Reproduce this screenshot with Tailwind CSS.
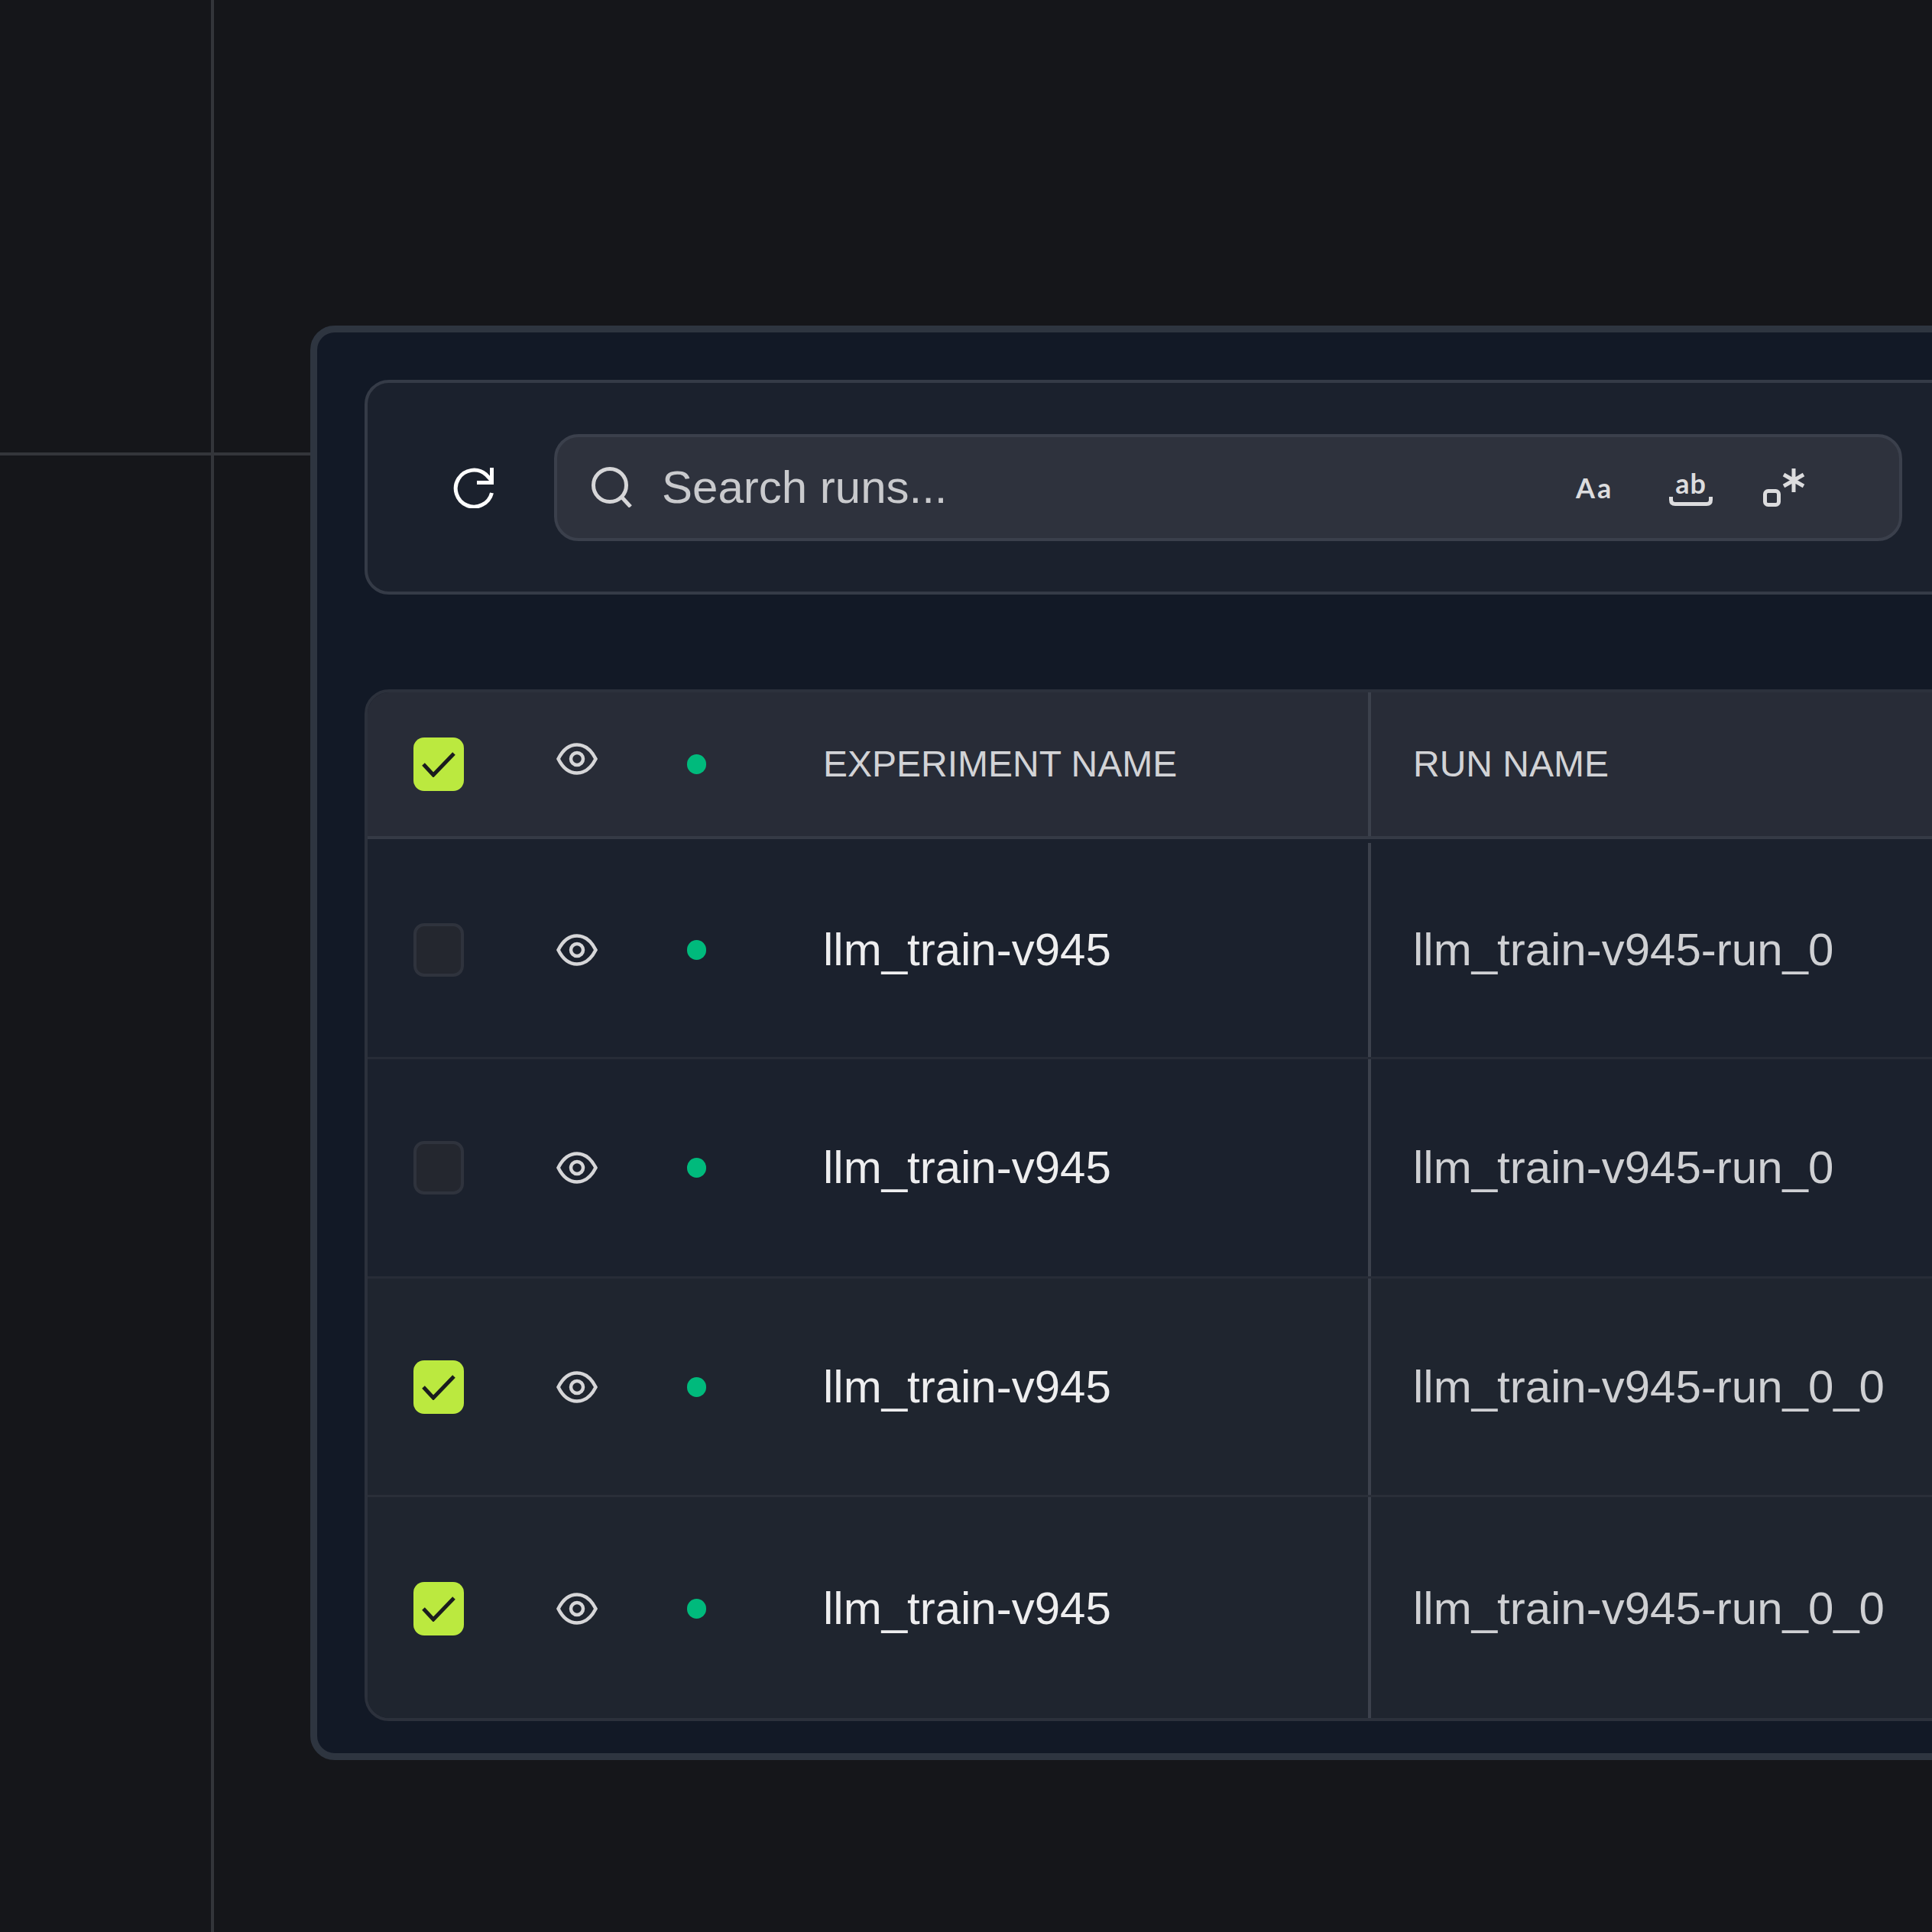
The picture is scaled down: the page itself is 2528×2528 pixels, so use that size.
<!DOCTYPE html>
<html lang="en">
<head>
    <meta charset="UTF-8">
    <title>Runs table</title>
    <script src="https://cdn.jsdelivr.net/npm/@tailwindcss/browser@4"></script>
</head>
<body class="relative w-[2528px] h-[2528px] overflow-hidden bg-[#15161a] font-['Liberation_Sans',sans-serif]">
    <!-- guide lines behind the panel -->
    <div class="absolute left-[276px] top-0 w-[4px] h-full bg-[#33353a]"></div>
    <div class="absolute left-0 top-[592px] w-[406px] h-[4px] bg-[#33353a]"></div>

    <div class="relative ml-[406px] mt-[426px] w-[2300px] h-[1877px] p-[62px] border-[9px] border-[#2e3540] rounded-[32px] bg-[#121926] [margin-top:426px]">
        <!-- toolbar -->
        <div class="flex items-center h-[281px] pl-[112px] border-[4px] border-[#353b47] rounded-[32px] bg-[#1b212d]">
            <svg class="w-[53px] h-[53px] mt-[2px]" viewBox="0 0 53 53" fill="none" stroke="#ffffff" stroke-width="5">
                <path d="M50.5 33 A24 24 0 1 1 43 9 L50.5 17"/>
                <path d="M50.5 0 V19.5 H31"/>
            </svg>
            <div class="flex items-center ml-[79px] w-[1764px] h-[140px] pl-[45px] border-[4px] border-[#3b404c] rounded-[32px] bg-[#2e323d]">
                <svg class="w-[53px] h-[53px]" viewBox="0 0 53 53" fill="none" stroke="#d6d6d8" stroke-width="5">
                    <circle cx="24" cy="24" r="21.5"/>
                    <path d="M40 40 L51 52"/>
                </svg>
                <span class="ml-[39px] w-[1196px] text-[60px] leading-none text-[#c9cacd]">Search runs...</span>
                <span class="w-[100px] font-['Lato',sans-serif] font-bold text-[36px] leading-none tracking-[3px] text-[#dcdcde]">Aa</span>
                <span class="flex flex-col items-center w-[57px] ml-[22px]">
                    <span class="font-['Lato',sans-serif] font-bold text-[36px] leading-none tracking-[1px] text-[#dcdcde]">ab</span>
                    <svg class="w-[57px] h-[12px]" viewBox="0 0 57 12" fill="none" stroke="#dcdcde" stroke-width="5"><path d="M2.5 0 V4 Q2.5 9.5 8 9.5 H49 Q54.5 9.5 54.5 4 V0"/></svg>
                </span>
                <svg class="w-[56px] h-[54px] ml-[66px]" viewBox="0 0 56 54" fill="none" stroke="#dcdcde">
                    <rect x="2.5" y="31.5" width="18" height="18" rx="4" stroke-width="5"/>
                    <path d="M40 2 V33 M27 10 L53 25 M53 10 L27 25" stroke-width="5"/>
                </svg>
            </div>
        </div>

        <!-- table -->
        <div class="mt-[124px] h-[1350px] overflow-hidden border-[4px] border-[#2c313c] rounded-[32px] bg-[#1b212d]">
            <div class="flex items-center h-[192px] border-b-[4px] border-[#353a45] bg-[#282c37]">
                <div class="flex items-center justify-center ml-[60px] w-[66px] h-[70px] rounded-[14px] bg-[#bbe93f]">
                    <svg class="w-[44px] h-[34px]" viewBox="0 0 44 34" fill="none" stroke="#1a1c1e" stroke-width="5"><path d="M2 17 L15 31 L42 3"/></svg>
                </div>
                <svg class="ml-[121px] mb-[14px] w-[54px] h-[42px] shrink-0" viewBox="0 0 54 42" fill="none" stroke="#d6d6d8" stroke-width="4.5"><path d="M2.5 21 C9 8 18 2.5 27 2.5 C36 2.5 45 8 51.5 21 C45 34 36 39.5 27 39.5 C18 39.5 9 34 2.5 21 Z"/><circle cx="27" cy="21" r="8"/></svg>
                <div class="ml-[117px] w-[25px] h-[26px] rounded-full bg-[#00ba7c]"></div>
                <div class="ml-[153px] w-[713px] text-[48px] text-[#d2d3d6]">EXPERIMENT NAME</div>
                <div class="self-stretch flex items-center pl-[55px] border-l-[4px] border-[#3c414c] text-[48px] text-[#d2d3d6]">RUN NAME</div>
            </div>

            <div class="mt-[5px]">
                <div class="flex items-center h-[283px] border-b-[3px] border-[#272c37] bg-[#1b212d]">
                    <div class="ml-[60px] w-[66px] h-[70px] border-[4px] border-[#2f333d] rounded-[14px] bg-[#24272f]"></div>
                    <svg class="ml-[121px] w-[54px] h-[42px] shrink-0" viewBox="0 0 54 42" fill="none" stroke="#d6d6d8" stroke-width="4.5"><path d="M2.5 21 C9 8 18 2.5 27 2.5 C36 2.5 45 8 51.5 21 C45 34 36 39.5 27 39.5 C18 39.5 9 34 2.5 21 Z"/><circle cx="27" cy="21" r="8"/></svg>
                    <div class="ml-[117px] w-[25px] h-[26px] rounded-full bg-[#00ba7c]"></div>
                    <div class="ml-[153px] w-[713px] text-[60px] text-[#eeeeef]">llm_train-v945</div>
                    <div class="self-stretch flex items-center pl-[55px] border-l-[4px] border-[#3c414c] text-[60px] text-[#cfd0d3]">llm_train-v945-run_0</div>
                </div>
                <div class="flex items-center h-[287px] border-b-[3px] border-[#272c37] bg-[#1b212d]">
                    <div class="ml-[60px] w-[66px] h-[70px] border-[4px] border-[#2f333d] rounded-[14px] bg-[#24272f]"></div>
                    <svg class="ml-[121px] w-[54px] h-[42px] shrink-0" viewBox="0 0 54 42" fill="none" stroke="#d6d6d8" stroke-width="4.5"><path d="M2.5 21 C9 8 18 2.5 27 2.5 C36 2.5 45 8 51.5 21 C45 34 36 39.5 27 39.5 C18 39.5 9 34 2.5 21 Z"/><circle cx="27" cy="21" r="8"/></svg>
                    <div class="ml-[117px] w-[25px] h-[26px] rounded-full bg-[#00ba7c]"></div>
                    <div class="ml-[153px] w-[713px] text-[60px] text-[#eeeeef]">llm_train-v945</div>
                    <div class="self-stretch flex items-center pl-[55px] border-l-[4px] border-[#3c414c] text-[60px] text-[#cfd0d3]">llm_train-v945-run_0</div>
                </div>
                <div class="flex items-center h-[286px] border-b-[3px] border-[#2a2f39] bg-[#1f252f]">
                    <div class="flex items-center justify-center ml-[60px] w-[66px] h-[70px] rounded-[14px] bg-[#bbe93f]">
                        <svg class="w-[44px] h-[34px]" viewBox="0 0 44 34" fill="none" stroke="#1a1c1e" stroke-width="5"><path d="M2 17 L15 31 L42 3"/></svg>
                    </div>
                    <svg class="ml-[121px] w-[54px] h-[42px] shrink-0" viewBox="0 0 54 42" fill="none" stroke="#d6d6d8" stroke-width="4.5"><path d="M2.5 21 C9 8 18 2.5 27 2.5 C36 2.5 45 8 51.5 21 C45 34 36 39.5 27 39.5 C18 39.5 9 34 2.5 21 Z"/><circle cx="27" cy="21" r="8"/></svg>
                    <div class="ml-[117px] w-[25px] h-[26px] rounded-full bg-[#00ba7c]"></div>
                    <div class="ml-[153px] w-[713px] text-[60px] text-[#eeeeef]">llm_train-v945</div>
                    <div class="self-stretch flex items-center pl-[55px] border-l-[4px] border-[#3c414c] text-[60px] text-[#cfd0d3]">llm_train-v945-run_0_0</div>
                </div>
                <div class="flex items-center h-[291px] bg-[#1f252f]">
                    <div class="flex items-center justify-center ml-[60px] w-[66px] h-[70px] rounded-[14px] bg-[#bbe93f]">
                        <svg class="w-[44px] h-[34px]" viewBox="0 0 44 34" fill="none" stroke="#1a1c1e" stroke-width="5"><path d="M2 17 L15 31 L42 3"/></svg>
                    </div>
                    <svg class="ml-[121px] w-[54px] h-[42px] shrink-0" viewBox="0 0 54 42" fill="none" stroke="#d6d6d8" stroke-width="4.5"><path d="M2.5 21 C9 8 18 2.5 27 2.5 C36 2.5 45 8 51.5 21 C45 34 36 39.5 27 39.5 C18 39.5 9 34 2.5 21 Z"/><circle cx="27" cy="21" r="8"/></svg>
                    <div class="ml-[117px] w-[25px] h-[26px] rounded-full bg-[#00ba7c]"></div>
                    <div class="ml-[153px] w-[713px] text-[60px] text-[#eeeeef]">llm_train-v945</div>
                    <div class="self-stretch flex items-center pl-[55px] border-l-[4px] border-[#3c414c] text-[60px] text-[#cfd0d3]">llm_train-v945-run_0_0</div>
                </div>
            </div>
        </div>
    </div>
</body>
</html>
